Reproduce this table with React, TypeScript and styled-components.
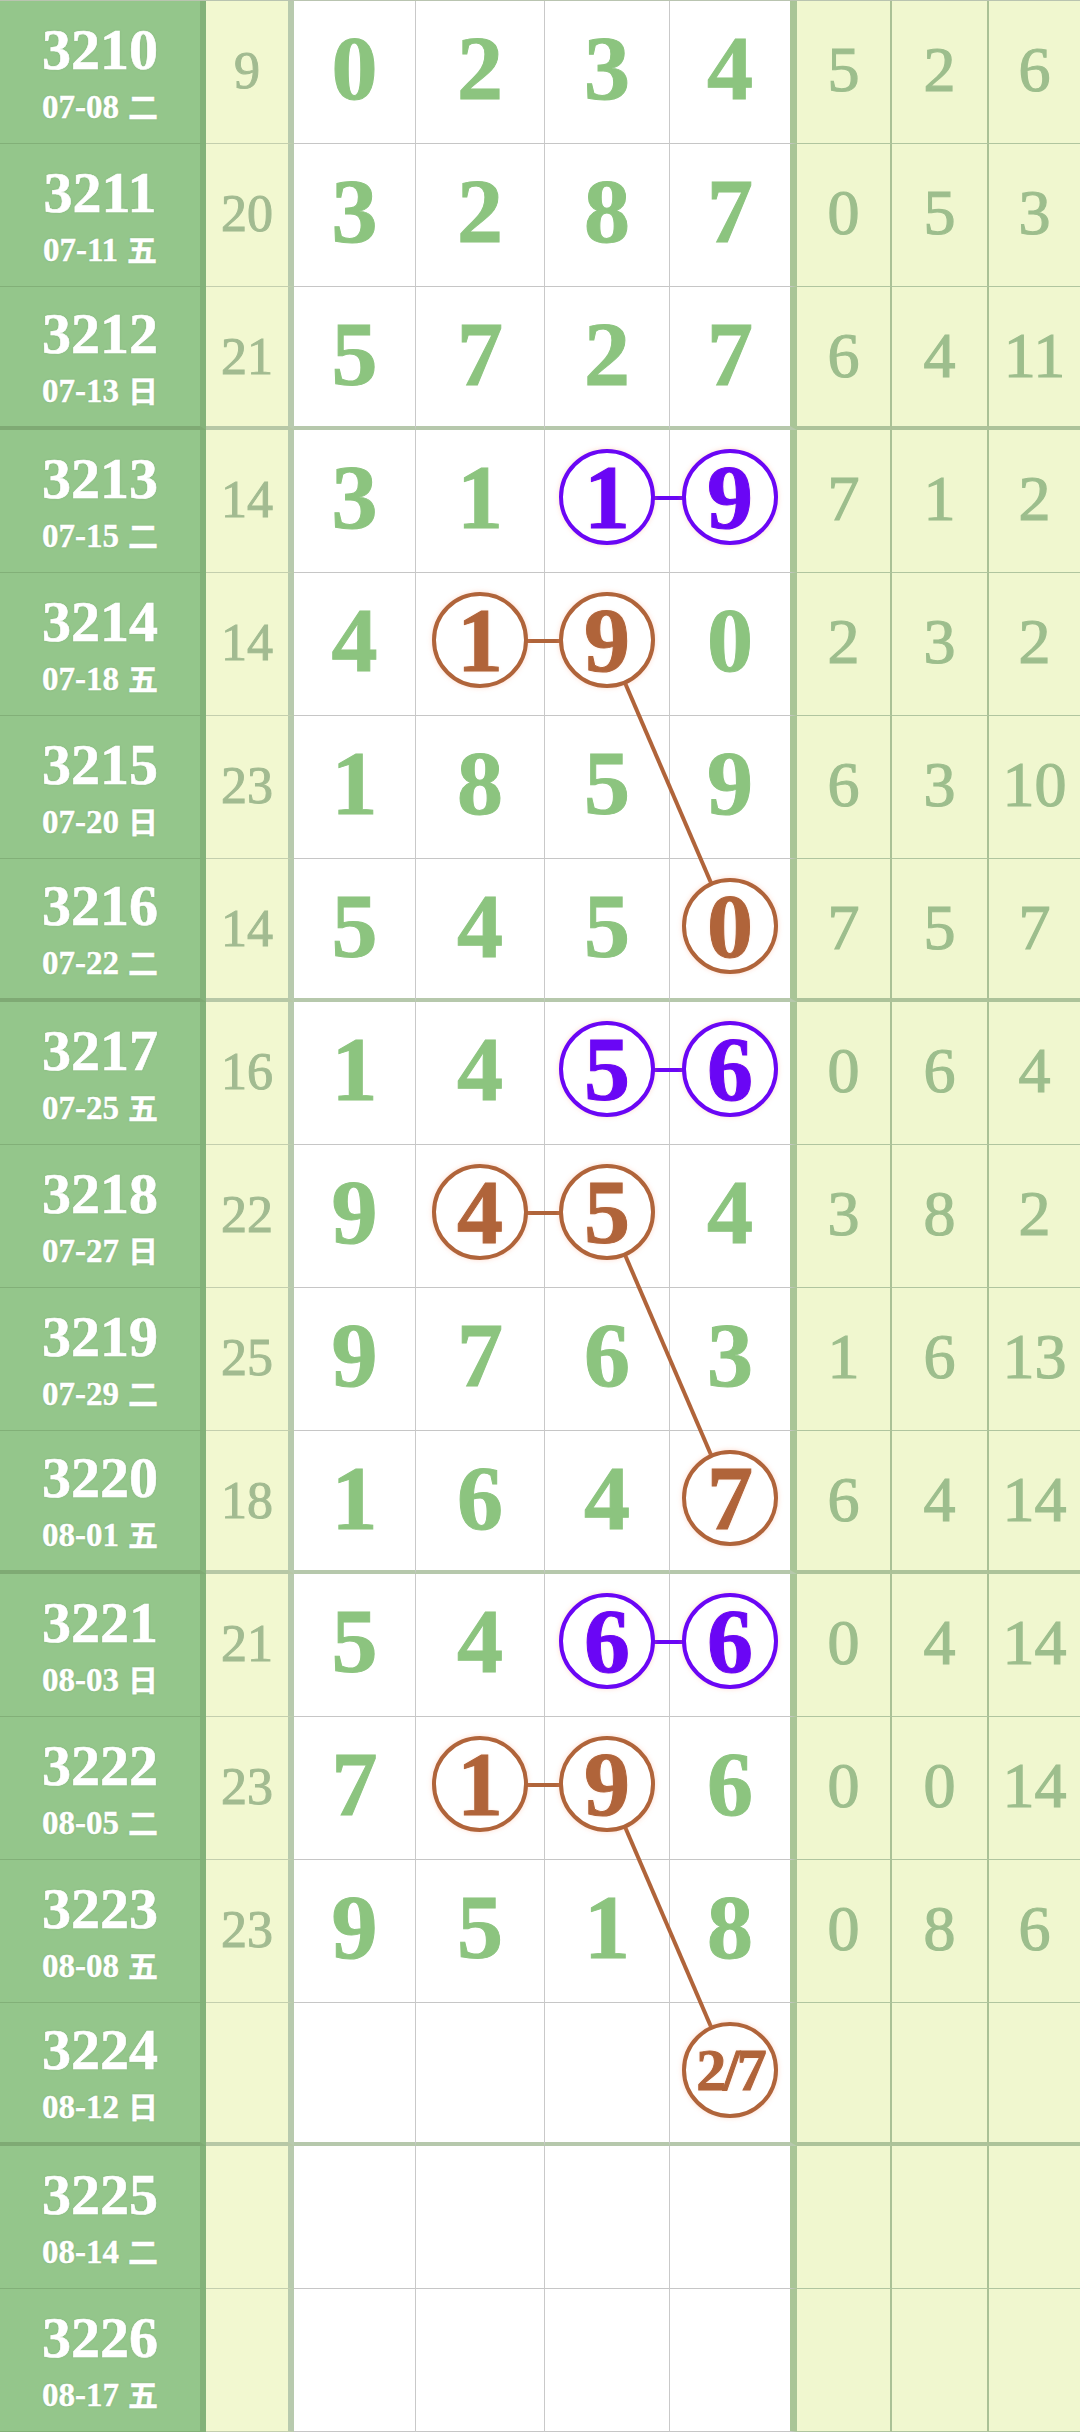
import React from "react";
import styled, { createGlobalStyle } from "styled-components";

const GlobalStyle = createGlobalStyle`
  html, body { margin: 0; padding: 0; background: #ffffff; }
  #root { width: 1080px; }
`;

const COLS = [206, 88, 122, 129, 125, 127, 95, 97, 91];
const ROW_H = 143;
const FONT = `"Liberation Serif", "Noto Sans CJK SC", serif`;

type Mark = "b" | "r" | null;

interface RowData {
  id: string;
  date: string;
  wd: string;
  sum?: string;
  digits: (string | null)[];
  marks?: Mark[];
  rest: string[];
}

const ROWS: RowData[] = [
  { id: "3210", date: "07-08", wd: "二", sum: "9", digits: ["0", "2", "3", "4"], rest: ["5", "2", "6"] },
  { id: "3211", date: "07-11", wd: "五", sum: "20", digits: ["3", "2", "8", "7"], rest: ["0", "5", "3"] },
  { id: "3212", date: "07-13", wd: "日", sum: "21", digits: ["5", "7", "2", "7"], rest: ["6", "4", "11"] },
  { id: "3213", date: "07-15", wd: "二", sum: "14", digits: ["3", "1", "1", "9"], marks: [null, null, "b", "b"], rest: ["7", "1", "2"] },
  { id: "3214", date: "07-18", wd: "五", sum: "14", digits: ["4", "1", "9", "0"], marks: [null, "r", "r", null], rest: ["2", "3", "2"] },
  { id: "3215", date: "07-20", wd: "日", sum: "23", digits: ["1", "8", "5", "9"], rest: ["6", "3", "10"] },
  { id: "3216", date: "07-22", wd: "二", sum: "14", digits: ["5", "4", "5", "0"], marks: [null, null, null, "r"], rest: ["7", "5", "7"] },
  { id: "3217", date: "07-25", wd: "五", sum: "16", digits: ["1", "4", "5", "6"], marks: [null, null, "b", "b"], rest: ["0", "6", "4"] },
  { id: "3218", date: "07-27", wd: "日", sum: "22", digits: ["9", "4", "5", "4"], marks: [null, "r", "r", null], rest: ["3", "8", "2"] },
  { id: "3219", date: "07-29", wd: "二", sum: "25", digits: ["9", "7", "6", "3"], rest: ["1", "6", "13"] },
  { id: "3220", date: "08-01", wd: "五", sum: "18", digits: ["1", "6", "4", "7"], marks: [null, null, null, "r"], rest: ["6", "4", "14"] },
  { id: "3221", date: "08-03", wd: "日", sum: "21", digits: ["5", "4", "6", "6"], marks: [null, null, "b", "b"], rest: ["0", "4", "14"] },
  { id: "3222", date: "08-05", wd: "二", sum: "23", digits: ["7", "1", "9", "6"], marks: [null, "r", "r", null], rest: ["0", "0", "14"] },
  { id: "3223", date: "08-08", wd: "五", sum: "23", digits: ["9", "5", "1", "8"], rest: ["0", "8", "6"] },
  { id: "3224", date: "08-12", wd: "日", digits: [null, null, null, "2/7"], marks: [null, null, null, "r"], rest: ["", "", ""] },
  { id: "3225", date: "08-14", wd: "二", digits: [null, null, null, null], rest: ["", "", ""] },
  { id: "3226", date: "08-17", wd: "五", digits: [null, null, null, null], rest: ["", "", ""] },
];

const SEP_ROWS = new Set([2, 6, 10, 14]);

// links: [rowA, colA, rowB, colB, color]
const LINKS: [number, number, number, number, Mark][] = [
  [3, 2, 3, 3, "b"],
  [4, 1, 4, 2, "r"],
  [4, 2, 6, 3, "r"],
  [7, 2, 7, 3, "b"],
  [8, 1, 8, 2, "r"],
  [8, 2, 10, 3, "r"],
  [11, 2, 11, 3, "b"],
  [12, 1, 12, 2, "r"],
  [12, 2, 14, 3, "r"],
];

const BLUE = "#6a06f5";
const BROWN = "#b0643a";

const colCenter = (j: number) => {
  const left = COLS[0] + COLS[1] + COLS.slice(2, 2 + j).reduce((a, b) => a + b, 0);
  const inner = j === 3 ? COLS[5] - 7 : COLS[2 + j] - 1;
  return left + inner / 2;
};
const rowCenter = (i: number) => ROW_H * i + 68;

const Table = styled.div`
  position: relative;
  width: 1080px;
  border-top: 1px solid #b9c4b0;
  font-family: ${FONT};
`;

const Row = styled.div`
  display: grid;
  grid-template-columns: ${COLS.map((c) => `${c}px`).join(" ")};
  height: ${ROW_H}px;
`;

const BaseCell = styled.div<{ $sep?: boolean }>`
  box-sizing: border-box;
  display: flex;
  align-items: center;
  justify-content: center;
  min-width: 0;
`;

const IdCell = styled(BaseCell)`
  flex-direction: column;
  background: #94c68b;
  border-right: 6px solid #84b27a;
  border-bottom: ${(p) => (p.$sep ? "4px solid #7faa74" : "1px solid #82b078")};
  color: #ffffff;
  font-weight: 700;
  text-shadow: 0 0 2px rgba(90, 130, 80, 0.35);
`;

const IdNum = styled.div`
  font-size: 58px;
  line-height: 58px;
  -webkit-text-stroke: 0.6px #ffffff;
`;

const IdDate = styled.div`
  margin-top: 10px;
  font-size: 33px;
  line-height: 33px;
  display: flex;
  align-items: baseline;
  gap: 9px;
  -webkit-text-stroke: 0.4px #ffffff;
`;

const Weekday = styled.span`
  font-family: "Noto Sans CJK SC", sans-serif;
  font-weight: 700;
  font-size: 30px;
`;

const SumCell = styled(BaseCell)`
  background: #f2f8d0;
  border-right: 6px solid #b8caae;
  border-bottom: ${(p) => (p.$sep ? "4px solid #b7c8a6" : "1px solid #c4cfae")};
  color: #a2bb91;
  font-size: 52px;
  line-height: 52px;
  -webkit-text-stroke: 1px #a2bb91;
  padding-bottom: ${(p) => (p.$sep ? 0 : 3)}px;
`;

const DigitCell = styled(BaseCell)<{ $last?: boolean }>`
  background: #ffffff;
  border-right: ${(p) => (p.$last ? "7px solid #a9c597" : "1px solid #c9c9c9")};
  border-bottom: ${(p) => (p.$sep ? "4px solid #b6c8ac" : "1px solid #c6c6c6")};
  padding-bottom: ${(p) => (p.$sep ? 5 : 8)}px;
`;

const Digit = styled.span`
  color: #8cc47f;
  font-weight: 700;
  font-size: 92px;
  line-height: 92px;
  -webkit-text-stroke: 1px #8cc47f;
`;

const Ball = styled.span<{ $c: string; $small?: boolean }>`
  position: relative;
  z-index: 2;
  box-sizing: border-box;
  width: 96px;
  height: 96px;
  flex: 0 0 96px;
  border-radius: 50%;
  border: 4.5px solid ${(p) => p.$c};
  background: #ffffff;
  display: flex;
  align-items: center;
  justify-content: center;
  color: ${(p) => p.$c};
  font-weight: 700;
  font-size: ${(p) => (p.$small ? 60 : 92)}px;
  line-height: 1;
  letter-spacing: ${(p) => (p.$small ? "-3px" : "0")};
  -webkit-text-stroke: 1px ${(p) => p.$c};
  box-shadow: 0 0 5px rgba(255, 150, 110, 0.35);
  text-shadow: 0 0 3px rgba(255, 170, 130, 0.35);
`;

const RestCell = styled(BaseCell)<{ $last?: boolean }>`
  background: #f0f7cf;
  border-right: ${(p) => (p.$last ? "none" : "2px solid #aac196")};
  border-bottom: ${(p) => (p.$sep ? "4px solid #adc39a" : "1px solid #b0c59f")};
  color: #9dbe8d;
  font-size: 64px;
  line-height: 64px;
  -webkit-text-stroke: 1.2px #9dbe8d;
  padding-bottom: ${(p) => (p.$sep ? 1 : 4)}px;
`;

const Overlay = styled.svg`
  position: absolute;
  left: 0;
  top: 0;
  z-index: 1;
  pointer-events: none;
`;

export default function App() {
  return (
    <>
      <GlobalStyle />
      <Table>
        {ROWS.map((r, i) => {
          const sep = SEP_ROWS.has(i);
          return (
            <Row key={r.id}>
              <IdCell $sep={sep}>
                <IdNum>{r.id}</IdNum>
                <IdDate>
                  <span>{r.date}</span>
                  <Weekday>{r.wd}</Weekday>
                </IdDate>
              </IdCell>
              <SumCell $sep={sep}>{r.sum ?? ""}</SumCell>
              {r.digits.map((d, j) => {
                const m = r.marks?.[j] ?? null;
                return (
                  <DigitCell key={j} $sep={sep} $last={j === 3}>
                    {d === null ? null : m ? (
                      <Ball $c={m === "b" ? BLUE : BROWN} $small={d.length > 1}>
                        {d}
                      </Ball>
                    ) : (
                      <Digit>{d}</Digit>
                    )}
                  </DigitCell>
                );
              })}
              {r.rest.map((v, k) => (
                <RestCell key={k} $sep={sep} $last={k === 2}>
                  {v}
                </RestCell>
              ))}
            </Row>
          );
        })}
        <Overlay width={1080} height={ROW_H * ROWS.length + 1} viewBox={`0 0 1080 ${ROW_H * ROWS.length + 1}`}>
          {LINKS.map(([ra, ca, rb, cb, c], n) => (
            <line
              key={n}
              x1={colCenter(ca)}
              y1={rowCenter(ra)}
              x2={colCenter(cb)}
              y2={rowCenter(rb)}
              stroke={c === "b" ? BLUE : BROWN}
              strokeWidth={4}
            />
          ))}
        </Overlay>
      </Table>
    </>
  );
}
